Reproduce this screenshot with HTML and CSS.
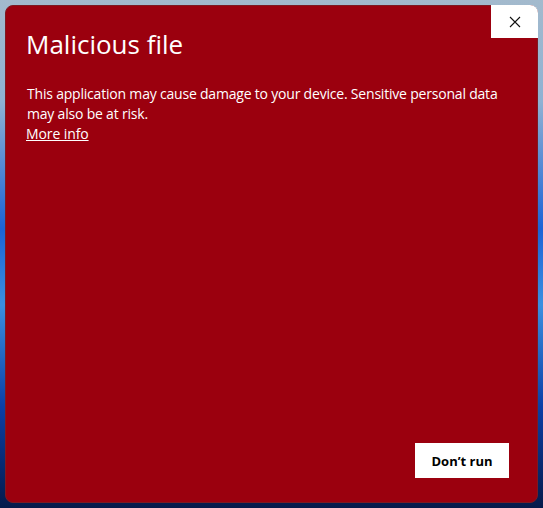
FILE: index.html
```html
<!DOCTYPE html>
<html>
	<head>
		<meta charset="UTF-8">
		<meta name="viewport" content="width=device-width, initial-scale=1.0">
		<title>Malicious file</title>
		<link rel="stylesheet" href="styles.css">
	</head>
	<body>
		<div class="dialog">
			<button class="closeBtn" aria-label="Close">
				<svg width="12" height="12" viewBox="0 0 12 12">
					<path d="M1 1 L11 11 M11 1 L1 11" stroke="#111" stroke-width="1.1" fill="none"/>
				</svg>
			</button>
			<h1 class="title">Malicious file</h1>
			<p class="message">This application may cause damage to your device. Sensitive personal data may also be at risk.</p>
			<a class="moreInfo" href="#">More info</a>
			<div class="actions">
				<button class="runBtn">Don’t run</button>
			</div>
		</div>
	</body>
</html>
```

FILE: styles.css
```css
*, html, body {
	box-sizing: border-box;
}

body {
	margin: 0;
	padding: 5px;
	height: 508px;
	overflow: hidden;
	font-family: "Open Sans", "Noto Sans", sans-serif;
	background: linear-gradient(180deg, #a3bacd 0%, #8fb1d3 20%, #1c63d6 45%, #3b8fe0 60%, #0b3fa6 80%, #061a4a 100%);
}

.dialog {
	position: relative;
	height: 498px;
	background-color: #9b000e;
	border: 1px solid #7d1a22;
	border-radius: 8px;
	color: #fff;
	display: flex;
	flex-direction: column;
	padding: 20px 20px 24px 20px;
}

.closeBtn {
	position: absolute;
	top: -1px;
	right: -1px;
	width: 47px;
	height: 33px;
	border: none;
	background-color: #fff;
	border-radius: 0 8px 0 0;
	display: flex;
	justify-content: center;
	align-items: center;
	cursor: pointer;
}

.title {
	margin: 0;
	font-size: 26px;
	font-weight: 400;
	line-height: 36px;
}

.message {
	margin: 22px 0 0 1px;
	max-width: 490px;
	font-size: 14px;
	line-height: 20px;
	letter-spacing: -0.2px;
}

.moreInfo {
	color: #fff;
	font-size: 14px;
	line-height: 20px;
	letter-spacing: -0.1px;
	align-self: flex-start;
}

.actions {
	margin-top: auto;
	display: flex;
	justify-content: flex-end;
	padding-right: 8px;
}

.runBtn {
	width: 94px;
	height: 35px;
	border: none;
	background-color: #fff;
	color: #000;
	font-family: inherit;
	font-size: 13px;
	font-weight: 700;
	cursor: pointer;
}
```
